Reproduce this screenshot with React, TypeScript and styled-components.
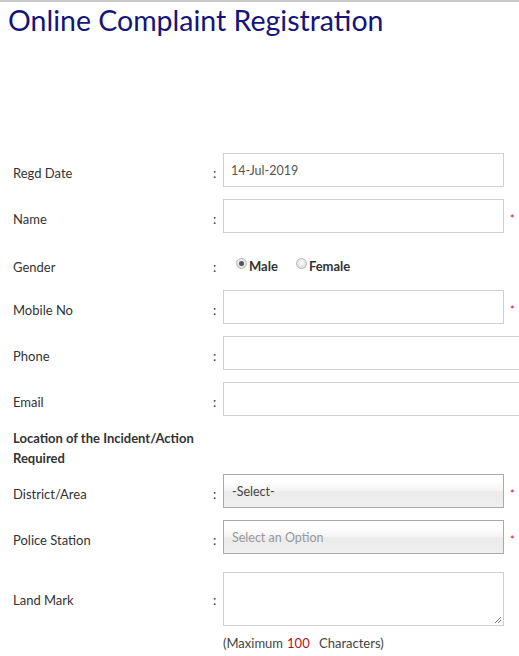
import React from "react";
import styled, { createGlobalStyle } from "styled-components";

const GlobalStyle = createGlobalStyle`
  html, body {
    margin: 0;
    padding: 0;
    overflow: hidden;
    background: #fff;
  }
  body {
    font-family: Lato, "Open Sans", sans-serif;
    font-size: 13px;
    color: #333;
  }
`;

const Page = styled.div`
  border-top: 2px solid #c8c8c8;
  padding: 0 0 0 8px;
`;

const Title = styled.h1`
  margin: 0;
  font-size: 28.5px;
  font-weight: 400;
  line-height: 36px;
  color: #14147a;
`;

const Form = styled.div`
  margin-top: 115px;
  padding-left: 5px;
  display: grid;
  grid-template-columns: 200px 10px auto;
  row-gap: 12px;
  align-items: center;
`;

const Label = styled.div<{ $offset?: number }>`
  padding-top: ${({ $offset }) => $offset ?? 6}px;
  line-height: 16px;
  white-space: nowrap;
`;

const Colon = styled.div<{ $offset?: number }>`
  padding-top: ${({ $offset }) => $offset ?? 6}px;
  line-height: 16px;
`;

const Field = styled.div`
  display: flex;
  align-items: center;
`;

const TextInput = styled.div<{ $wide?: boolean }>`
  box-sizing: border-box;
  width: ${({ $wide }) => ($wide ? 340 : 281)}px;
  flex-shrink: 0;
  height: 34px;
  border: 1px solid #cfcfcf;
  padding: 0 7px;
  display: flex;
  align-items: center;
  color: #555;
  font-size: 12.5px;
`;

const Required = styled.span`
  color: #c8102e;
  font-size: 11px;
  line-height: 12px;
  margin: 6px 0 0 6px;
`;

const RadioGroup = styled.div`
  box-sizing: border-box;
  height: 33px;
  display: flex;
  align-items: center;
  padding: 8px 0 0 13px;
  gap: 18px;
`;

const RadioOption = styled.label`
  display: flex;
  align-items: center;
  font-weight: 700;
  line-height: 16px;
  color: #333;
`;

const RadioDot = styled.span<{ $checked?: boolean }>`
  box-sizing: border-box;
  width: 11px;
  height: 11px;
  border-radius: 50%;
  border: 1px solid #b5b5b5;
  background: radial-gradient(circle at 50% 40%, #fafafa, #d6d6d6);
  margin-right: 2px;
  margin-top: -4px;
  display: flex;
  align-items: center;
  justify-content: center;
  &::after {
    content: "";
    width: 5px;
    height: 5px;
    border-radius: 50%;
    background: #555;
    display: ${({ $checked }) => ($checked ? "block" : "none")};
  }
`;

const Section = styled.div`
  grid-column: 1 / -1;
  max-width: 200px;
  font-weight: 700;
  line-height: 20px;
  margin: 0 0 -6px;
`;

const Select = styled.div<{ $placeholder?: boolean }>`
  box-sizing: border-box;
  width: 281px;
  height: 34px;
  border: 1px solid #aaa;
  background: linear-gradient(#ffffff 20%, #f3f3f3 50%, #ebebeb 52%, #efefef 100%);
  padding: 0 8px;
  display: flex;
  align-items: center;
  color: ${({ $placeholder }) => ($placeholder ? "#999" : "#444")};
  font-size: 12.5px;
`;

const TextArea = styled.div`
  box-sizing: border-box;
  position: relative;
  width: 281px;
  height: 54px;
  border: 1px solid #cfcfcf;
  margin-top: 6px;
`;

const Grip = styled.svg`
  position: absolute;
  right: 1px;
  bottom: 1px;
`;

const Note = styled.div`
  grid-column: 3;
  align-self: start;
  margin-top: -3px;
  line-height: 16px;
  color: #444;
`;

const Count = styled.span`
  color: #b0141e;
  margin: 0 6px 0 4px;
`;

const Row = ({
  label,
  children,
  offset,
}: {
  label: string;
  children: React.ReactNode;
  offset?: number;
}) => (
  <>
    <Label $offset={offset}>{label}</Label>
    <Colon $offset={offset}>:</Colon>
    <Field>{children}</Field>
  </>
);

export default function App() {
  return (
    <Page>
      <GlobalStyle />
      <Title>Online Complaint Registration</Title>
      <Form>
        <Row label="Regd Date">
          <TextInput>14-Jul-2019</TextInput>
        </Row>
        <Row label="Name">
          <TextInput />
          <Required>*</Required>
        </Row>
        <Row label="Gender" offset={10}>
          <RadioGroup>
            <RadioOption>
              <RadioDot $checked />
              Male
            </RadioOption>
            <RadioOption>
              <RadioDot />
              Female
            </RadioOption>
          </RadioGroup>
        </Row>
        <Row label="Mobile No">
          <TextInput />
          <Required>*</Required>
        </Row>
        <Row label="Phone">
          <TextInput $wide />
        </Row>
        <Row label="Email">
          <TextInput $wide />
        </Row>
        <Section>Location of the Incident/Action Required</Section>
        <Row label="District/Area">
          <Select>-Select-</Select>
          <Required>*</Required>
        </Row>
        <Row label="Police Station">
          <Select $placeholder>Select an Option</Select>
          <Required>*</Required>
        </Row>
        <Row label="Land Mark" offset={8}>
          <TextArea>
            <Grip width="9" height="9" viewBox="0 0 9 9">
              <path d="M8 2 L2 8 M8 5 L5 8" stroke="#777" strokeWidth="1" />
            </Grip>
          </TextArea>
        </Row>
        <Note>
          (Maximum<Count>100</Count> Characters)
        </Note>
      </Form>
    </Page>
  );
}
